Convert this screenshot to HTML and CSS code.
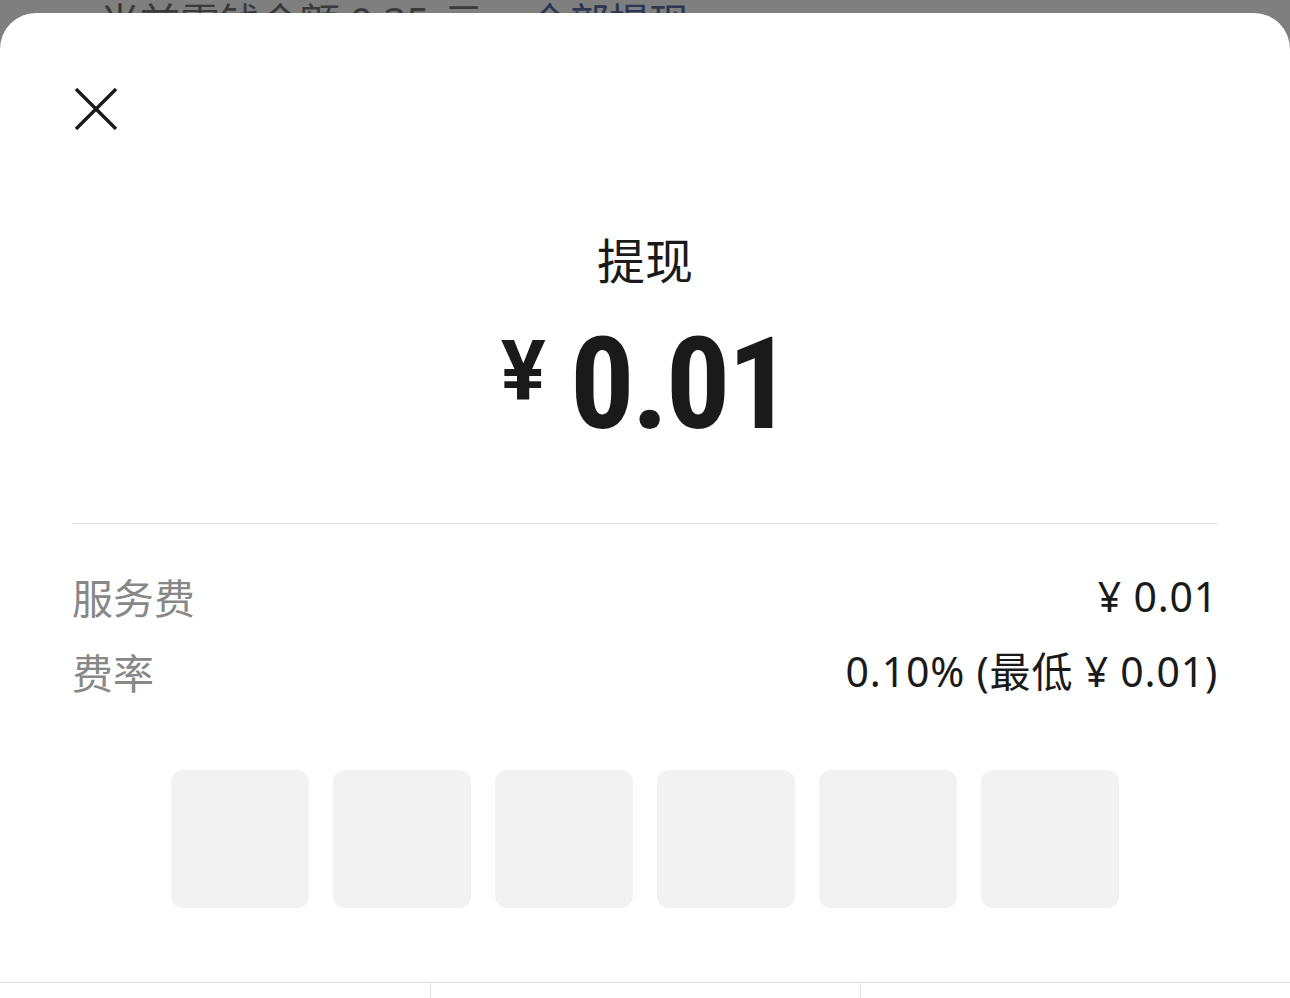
FILE: index.html
```html
<!DOCTYPE html>
<html>
  <head>
    <title>提现</title>
    <link rel="stylesheet" href="styles.css">
  </head>
  <body>
    <div class="behind">
      当前零钱余额<span class="sum">0.35</span>元，<span class="link">全部提现</span>
    </div>
    <div class="sheet">
      <div class="sheet-head">
        <svg class="close" width="42" height="42" viewBox="0 0 42 42">
          <path d="M1 1 L41 41 M41 1 L1 41" stroke="#1a1a1a" stroke-width="3.4" fill="none" />
        </svg>
      </div>

      <h1 class="title">提现</h1>
      <div class="amount">
        <span class="yen">¥</span>
        <span class="num">0.01</span>
      </div>

      <div class="divider"></div>

      <div class="rows">
        <div class="row">
          <span class="label">服务费</span>
          <span class="value">¥ 0.01</span>
        </div>
        <div class="row">
          <span class="label">费率</span>
          <span class="value">0.10% (最低 ¥ 0.01)</span>
        </div>
      </div>

      <div class="pin">
        <div class="pin-box"></div>
        <div class="pin-box"></div>
        <div class="pin-box"></div>
        <div class="pin-box"></div>
        <div class="pin-box"></div>
        <div class="pin-box"></div>
      </div>

      <div class="keypad">
        <div class="key"></div>
        <div class="key"></div>
        <div class="key"></div>
      </div>
    </div>
  </body>
</html>
```

FILE: styles.css
```css
body {
  margin: 0;
  padding: 0;
  height: 998px;
  overflow: hidden;
  background-color: #7f7f7f;
  font-family: "Noto Sans CJK SC", "Noto Sans", sans-serif;
}

.behind {
  height: 13px;
  overflow: hidden;
  padding-left: 100px;
  font-size: 40px;
  line-height: 40px;
  color: #3a3a3a;
  white-space: nowrap;
}

.behind .sum {
  margin: 0 14px 0 10px;
  font-family: "Noto Sans", sans-serif;
}

.behind .link {
  margin-left: 6px;
  color: #2c3552;
}

.sheet {
  height: 985px;
  background-color: #fff;
  border-radius: 36px 36px 0 0;
  overflow: hidden;
}

.sheet-head {
  padding: 75px 0 0 75px;
  height: 42px;
}

.close {
  display: block;
}

.title {
  margin: 104px 0 0;
  text-align: center;
  font-size: 48px;
  line-height: 48px;
  font-weight: 400;
  color: #1a1a1a;
}

.amount {
  margin-top: 38px;
  display: flex;
  justify-content: center;
  align-items: flex-start;
  gap: 24px;
  color: #1a1a1a;
  font-weight: 700;
}

.yen {
  margin-top: 10px;
  font-family: Roboto, sans-serif;
  font-size: 84px;
  line-height: 84px;
}

.num {
  font-family: "Roboto Condensed", Roboto, sans-serif;
  font-size: 128px;
  line-height: 128px;
  letter-spacing: -3px;
}

.divider {
  margin: 75px 72px 0;
  height: 1px;
  background-color: #e5e5e5;
}

.rows {
  margin: 35px 72px 0;
}

.row {
  display: flex;
  justify-content: space-between;
  font-size: 41px;
  line-height: 75px;
}

.label {
  color: #888;
}

.value {
  color: #1a1a1a;
  letter-spacing: 0.8px;
  font-family: "Noto Sans", "Noto Sans CJK SC", sans-serif;
}

.pin {
  margin-top: 61px;
  display: flex;
  justify-content: center;
  gap: 24px;
}

.pin-box {
  width: 138px;
  height: 138px;
  border-radius: 12px;
  background-color: #f2f2f2;
}

.keypad {
  margin-top: 74px;
  display: grid;
  grid-template-columns: 430px 430px 430px;
  border-top: 1px solid #e0e0e0;
  height: 100px;
}

.key + .key {
  border-left: 1px solid #e0e0e0;
}
```
